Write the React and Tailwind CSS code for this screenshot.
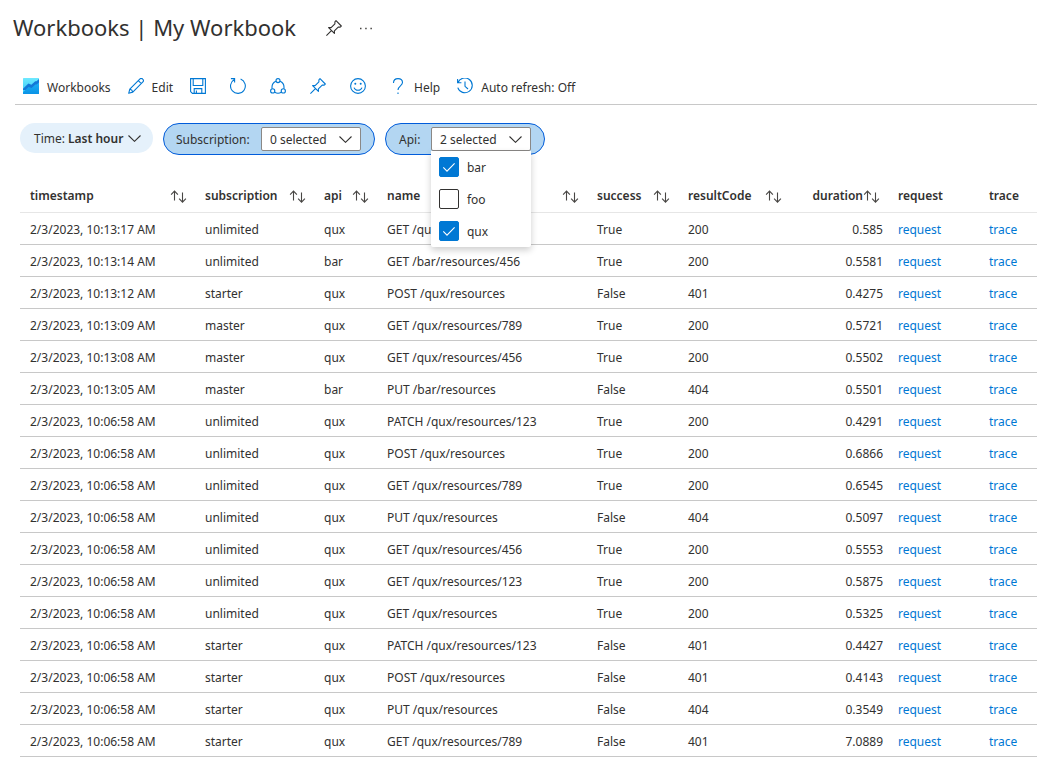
import { useState } from "react";

const rows = [
  ["2/3/2023, 10:13:17 AM", "unlimited", "qux", "GET /qux/resources/456", "True", "200", "0.585"],
  ["2/3/2023, 10:13:14 AM", "unlimited", "bar", "GET /bar/resources/456", "True", "200", "0.5581"],
  ["2/3/2023, 10:13:12 AM", "starter", "qux", "POST /qux/resources", "False", "401", "0.4275"],
  ["2/3/2023, 10:13:09 AM", "master", "qux", "GET /qux/resources/789", "True", "200", "0.5721"],
  ["2/3/2023, 10:13:08 AM", "master", "qux", "GET /qux/resources/456", "True", "200", "0.5502"],
  ["2/3/2023, 10:13:05 AM", "master", "bar", "PUT /bar/resources", "False", "404", "0.5501"],
  ["2/3/2023, 10:06:58 AM", "unlimited", "qux", "PATCH /qux/resources/123", "True", "200", "0.4291"],
  ["2/3/2023, 10:06:58 AM", "unlimited", "qux", "POST /qux/resources", "True", "200", "0.6866"],
  ["2/3/2023, 10:06:58 AM", "unlimited", "qux", "GET /qux/resources/789", "True", "200", "0.6545"],
  ["2/3/2023, 10:06:58 AM", "unlimited", "qux", "PUT /qux/resources", "False", "404", "0.5097"],
  ["2/3/2023, 10:06:58 AM", "unlimited", "qux", "GET /qux/resources/456", "True", "200", "0.5553"],
  ["2/3/2023, 10:06:58 AM", "unlimited", "qux", "GET /qux/resources/123", "True", "200", "0.5875"],
  ["2/3/2023, 10:06:58 AM", "unlimited", "qux", "GET /qux/resources", "True", "200", "0.5325"],
  ["2/3/2023, 10:06:58 AM", "starter", "qux", "PATCH /qux/resources/123", "False", "401", "0.4427"],
  ["2/3/2023, 10:06:58 AM", "starter", "qux", "POST /qux/resources", "False", "401", "0.4143"],
  ["2/3/2023, 10:06:58 AM", "starter", "qux", "PUT /qux/resources", "False", "404", "0.3549"],
  ["2/3/2023, 10:06:58 AM", "starter", "qux", "GET /qux/resources/789", "False", "401", "7.0889"],
];

const columns = [
  { name: "timestamp", width: "w-[175px]", sortable: true },
  { name: "subscription", width: "w-[119px]", sortable: true },
  { name: "api", width: "w-[63px]", sortable: true },
  { name: "name", width: "w-[210px]", sortable: true },
  { name: "success", width: "w-[91px]", sortable: true },
  { name: "resultCode", width: "w-[112px]", sortable: true },
  { name: "duration", width: "w-[98px]", sortable: true, numeric: true },
  { name: "request", width: "w-[91px]" },
  { name: "trace", width: "w-auto" },
];

function Icon({ children, className = "text-[#0078d4]" }) {
  return (
    <svg
      viewBox="0 0 16 16"
      className={`size-4 shrink-0 ${className}`}
      fill="none"
      stroke="currentColor"
      strokeWidth="1.1"
      aria-hidden="true"
    >
      {children}
    </svg>
  );
}

function PinIcon({ className }) {
  return (
    <Icon className={className}>
      <path d="M0.4 15.6 5.4 10.6M2.6 7.6 8.4 13.4V10.9L12.2 7.1H14.2L15.3 6 10 0.7 8.9 1.8V3.8L5.1 7.6Z" strokeLinejoin="round" />
    </Icon>
  );
}

function WorkbooksIcon() {
  return (
    <svg viewBox="0 0 16 16" className="size-4 shrink-0" aria-hidden="true">
      <defs>
        <linearGradient id="wb-sky" x1="0" y1="0" x2="0" y2="1">
          <stop offset="0" stopColor="#6fe9ff" />
          <stop offset="1" stopColor="#32c8f5" />
        </linearGradient>
        <linearGradient id="wb-area" x1="0" y1="0" x2="0" y2="1">
          <stop offset="0" stopColor="#1fb0f5" />
          <stop offset="1" stopColor="#0a93e6" />
        </linearGradient>
      </defs>
      <rect width="16" height="16" rx="0.5" fill="url(#wb-sky)" />
      <path d="M0 10.8 5.4 5.4 8.4 6.8 12.2 3.2H13.6L16 1V12H0Z" fill="#1478d8" />
      <path d="M0 14.2 5.6 9 8.6 10 12.4 6.4H13.6L16 4.4V15.5a.5.5 0 0 1-.5.5H.5a.5.5 0 0 1-.5-.5Z" fill="url(#wb-area)" />
    </svg>
  );
}

function EditIcon() {
  return (
    <Icon>
      <path d="M0.7 15.3 1.8 11.1 12 .9C12.8.2 13.9.2 14.7 1.1c1 .9 1 2 .2 2.8L4.8 14.1ZM1.8 11.1Q4.3 11.6 4.8 14.1M10.3 2.6 13.3 5.6" strokeLinejoin="round" />
    </Icon>
  );
}

function SaveIcon() {
  return (
    <Icon>
      <path d="M.6.6H15.4V15.4H2.4L.6 13.6ZM3.2.6V7.5H12.8V.6M4.2 15.4V10.6H11.8V15.4M6.4 12.6V15.4" />
    </Icon>
  );
}

function RefreshIcon() {
  return (
    <Icon>
      <path d="M.9 .6H4.6V4.4M4.4 1.5A7.4 7.4 0 1 0 10.6 1.1" />
    </Icon>
  );
}

function ShareIcon() {
  return (
    <Icon>
      <circle cx="8" cy="2.6" r="2" />
      <circle cx="2.7" cy="12.9" r="2.1" />
      <circle cx="13.3" cy="12.9" r="2.1" />
      <path d="M5.9 3.2C3.2 4.4 1.6 7.3 2.1 10.7M10.1 3.2C12.8 4.4 14.4 7.3 13.9 10.7M4.7 14.2Q8 16.2 11.3 14.2" />
    </Icon>
  );
}

function SmileIcon() {
  return (
    <Icon>
      <circle cx="8" cy="8" r="7.4" />
      <path d="M4 9.6A4.3 4.3 0 0 0 12 9.6" />
      <circle cx="5.3" cy="5.7" r="1" fill="currentColor" stroke="none" />
      <circle cx="10.7" cy="5.7" r="1" fill="currentColor" stroke="none" />
    </Icon>
  );
}

function HelpIcon() {
  return (
    <Icon>
      <path d="M3.5 5C3.5 2.4 5.2.6 8 .6S12.5 2.4 12.5 4.6C12.5 7.8 8 8 8 12M8 14.4V16" />
    </Icon>
  );
}

function HistoryIcon() {
  return (
    <Icon>
      <path d="M.6 1V4.8H4.4M.9 4.8A7.4 7.4 0 1 1 .8 9.6M8 3.4V8.3L11 11" />
    </Icon>
  );
}

function Chevron({ className = "" }) {
  return (
    <svg viewBox="0 0 13 7" className={`pointer-events-none h-[7px] w-[13px] shrink-0 ${className}`} fill="none" stroke="#323130" strokeWidth="1.1" aria-hidden="true">
      <path d="M.5.5 6.5 6.3 12.5.5" />
    </svg>
  );
}

function SortIcon() {
  return (
    <svg viewBox="0 0 17 13" className="h-[13px] w-[17px] shrink-0" fill="none" stroke="#484644" strokeWidth="1.1" aria-hidden="true">
      <path d="M4.5 10.6V1.2M1.1 4.6 4.5 1.1 7.9 4.6M12.5 2.4V12M9.1 8.6 12.5 12.1 15.9 8.6" />
    </svg>
  );
}

function ToolButton({ icon, label, hideLabel }) {
  return (
    <button type="button" aria-label={label} className="flex h-6 items-center gap-2 whitespace-nowrap">
      {icon}
      {!hideLabel && <span className="pt-[3px]">{label}</span>}
    </button>
  );
}

function ApiFilter() {
  const [picked, setPicked] = useState({ bar: true, foo: false, qux: true });
  const [open, setOpen] = useState(true);
  const count = Object.values(picked).filter(Boolean).length;

  return (
    <div className="flex h-8 items-center rounded-full border border-[#015cda] bg-[#b3d6f2] px-[13px]">
      <span id="api-label" className="w-8 pt-0.5">Api:</span>
      <div className="relative">
        <button
          type="button"
          aria-labelledby="api-label"
          aria-expanded={open}
          onClick={() => setOpen(!open)}
          className="flex h-6 w-[100px] items-center justify-between rounded-xs border border-[#8a8886] bg-white px-2"
        >
          <span className="pt-0.5">{count} selected</span>
          <Chevron />
        </button>
        {open && (
          <div className="absolute top-full left-0 z-10 w-full rounded-b-xs bg-white shadow-[0_3px_7px_rgba(0,0,0,0.2)]">
            {Object.keys(picked).map((key) => (
              <label key={key} className="flex h-8 items-center gap-2 px-2">
                <span className="grid size-5">
                  <input
                    type="checkbox"
                    checked={picked[key]}
                    onChange={() => setPicked({ ...picked, [key]: !picked[key] })}
                    className="col-start-1 row-start-1 size-5 appearance-none rounded-xs border border-[#323130] bg-white checked:border-[#0078d4] checked:bg-[#0078d4]"
                  />
                  {picked[key] && (
                    <svg viewBox="0 0 20 20" className="pointer-events-none col-start-1 row-start-1 size-5" fill="none" stroke="white" strokeWidth="1.1" aria-hidden="true">
                      <path d="M4.3 10.4 8 14.1 15.6 6.3" />
                    </svg>
                  )}
                </span>
                <span className="pt-0.5">{key}</span>
              </label>
            ))}
          </div>
        )}
      </div>
    </div>
  );
}

export default function App() {
  return (
    <main className="bg-white font-['Noto_Sans','Open_Sans',sans-serif] text-[12px] leading-4 text-[#323130]">
      <header className="flex h-14 items-center pl-[13px]">
        <h1 className="pb-0.5 text-[22px] leading-8">Workbooks | My Workbook</h1>
        <button type="button" aria-label="Pin" className="ml-[30px]">
          <PinIcon className="text-[#323130]" />
        </button>
        <button type="button" aria-label="More" className="ml-4">
          <Icon className="text-[#484644]">
            <path d="M2 8.5H3.5M7.2 8.5H8.7M12.4 8.5H13.9" strokeWidth="1.5" />
          </Icon>
        </button>
      </header>

      <div role="toolbar" aria-label="Workbook commands" className="mr-[18px] ml-[15px] flex h-[49px] items-center border-b border-[#c8c8c8] pt-3 pl-2">
        <div className="flex items-center gap-[17px]">
          <ToolButton icon={<WorkbooksIcon />} label="Workbooks" />
          <ToolButton icon={<EditIcon />} label="Edit" />
        </div>
        <div className="flex items-center gap-6 pr-6 pl-[17px]">
          <ToolButton icon={<SaveIcon />} label="Save" hideLabel />
          <ToolButton icon={<RefreshIcon />} label="Refresh" hideLabel />
          <ToolButton icon={<ShareIcon />} label="Share" hideLabel />
          <ToolButton icon={<PinIcon />} label="Pin workbook" hideLabel />
          <ToolButton icon={<SmileIcon />} label="Feedback" hideLabel />
        </div>
        <div className="flex items-center gap-[17px]">
          <ToolButton icon={<HelpIcon />} label="Help" />
          <ToolButton icon={<HistoryIcon />} label="Auto refresh: Off" />
        </div>
      </div>

      <div className="flex items-start gap-[10px] pt-[18px] pl-5">
        <div className="flex h-[30px] items-center rounded-full bg-[#e5f1fb] pr-3 pl-[14px]">
          <label htmlFor="time" className="pt-0.5">Time:</label>
          <div className="grid items-center">
            <select id="time" className="col-start-1 row-start-1 w-[76px] appearance-none bg-transparent pt-0.5 pl-[3px] font-semibold">
              <option>Last hour</option>
            </select>
            <Chevron className="col-start-1 row-start-1 justify-self-end" />
          </div>
        </div>
        <div className="flex h-8 items-center rounded-full border border-[#015cda] bg-[#b3d6f2] pr-[13px] pl-3">
          <label htmlFor="subscription" className="w-[85px] pt-0.5">Subscription:</label>
          <div className="grid items-center">
            <select id="subscription" className="col-start-1 row-start-1 h-6 w-[100px] appearance-none rounded-xs border border-[#8a8886] bg-white pt-0.5 pl-2">
              <option>0 selected</option>
            </select>
            <Chevron className="col-start-1 row-start-1 mr-[9px] justify-self-end" />
          </div>
        </div>
        <ApiFilter />
      </div>

      <div className="pt-6 pr-[18px] pb-3 pl-5">
        <table className="w-full table-fixed border-collapse">
          <thead>
            <tr className="h-[33px] border-b border-[#e6e6e6]">
              {columns.map((c) => (
                <th key={c.name} scope="col" className={`${c.width} p-0 pt-0.5 text-left font-semibold`}>
                  {c.sortable ? (
                    <button
                      type="button"
                      className={c.numeric ? "flex w-full items-center justify-end pr-2" : "flex w-full items-center justify-between pr-2 pl-[10px]"}
                    >
                      {c.name}
                      <SortIcon />
                    </button>
                  ) : (
                    <span className="pl-[10px]">{c.name}</span>
                  )}
                </th>
              ))}
            </tr>
          </thead>
          <tbody>
            {rows.map((r, i) => (
              <tr key={i} className="h-8 border-b border-[#c8c8c8]">
                {r.map((value, j) => (
                  <td key={j} className={j === 6 ? "p-0 pt-[3px] pr-[5px] text-right" : "p-0 pt-[3px] pl-[10px] whitespace-nowrap"}>
                    {value}
                  </td>
                ))}
                <td className="p-0 pt-[3px] pl-[10px]">
                  <a href="#request" className="text-[#0078d4]">request</a>
                </td>
                <td className="p-0 pt-[3px] pl-[10px]">
                  <a href="#trace" className="text-[#0078d4]">trace</a>
                </td>
              </tr>
            ))}
          </tbody>
        </table>
      </div>
    </main>
  );
}
